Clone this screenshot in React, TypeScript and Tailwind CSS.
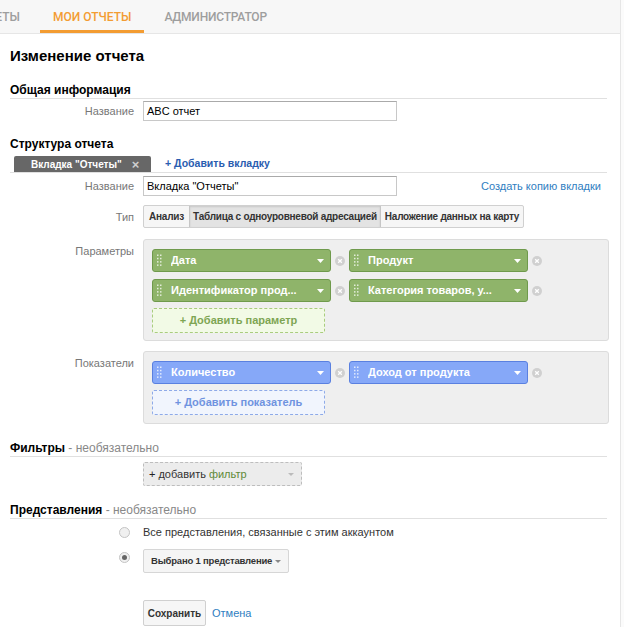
import React from 'react';

function Dots() {
  const items: React.ReactElement[] = [];
  for (let r = 0; r < 4; r++) {
    for (let c = 0; c < 2; c++) {
      items.push(<rect key={`${r}-${c}`} x={c * 3} y={r * 3.3 + 0.5} width="1.5" height="1.5" fill="rgba(255,255,255,0.75)" />);
    }
  }
  return (
    <svg width="5" height="13" viewBox="0 0 5 13">
      {items}
    </svg>
  );
}

function Chip({ label, color }: { label: string; color: 'green' | 'blue' }) {
  const cls = color === 'green' ? 'bg-[#8fb46a] border-[#6f9a4c]' : 'bg-[#86a8f8] border-[#5a80e0]';
  return (
    <div className={`flex items-center h-[23px] w-[179px] rounded-[3px] border ${cls} pl-[4px] pr-[6px]`}>
      <Dots />
      <span className="ml-[9px] flex-1 text-[11px] font-bold text-white whitespace-nowrap overflow-hidden">{label}</span>
      <svg width="7" height="4" viewBox="0 0 7 4">
        <path d="M0 0h7L3.5 4z" fill="#fff" />
      </svg>
    </div>
  );
}

function XIcon() {
  return (
    <svg width="10" height="10" viewBox="0 0 10 10">
      <circle cx="5" cy="5" r="5" fill="#d0d0d0" />
      <path d="M3.2 3.2l3.6 3.6M6.8 3.2l-3.6 3.6" stroke="#fff" strokeWidth="1.3" />
    </svg>
  );
}

function ChipRow({ a, b, color }: { a: string; b: string; color: 'green' | 'blue' }) {
  return (
    <div className="flex items-center gap-[4px]">
      <Chip label={a} color={color} />
      <XIcon />
      <Chip label={b} color={color} />
      <XIcon />
    </div>
  );
}

function SectionTitle({ title, optional }: { title: string; optional?: boolean }) {
  return (
    <div className="border-b border-[#e0e0e0] text-[12px] leading-[16px] text-black">
      <span className="font-bold">{title}</span>
      {optional && <span className="text-[#888]"> - необязательно</span>}
    </div>
  );
}

function Radio({ checked }: { checked?: boolean }) {
  return (
    <div className="w-[11px] h-[11px] rounded-full border border-[#c4c4c4] bg-[#f0f0f0] flex items-center justify-center">
      {checked && <div className="w-[5px] h-[5px] rounded-full bg-[#666]" />}
    </div>
  );
}

export default function App() {
  return (
    <div className="w-[624px] h-[627px] overflow-hidden flex bg-white font-['Liberation_Sans',Arial,sans-serif]">
      <div className="w-[621px] border-r border-[#e6e6e6] flex flex-col shrink-0">
        {/* nav */}
        <div className="h-[34px] bg-[#f7f7f7] border-b border-[#e6e6e6] flex font-['Roboto',sans-serif] text-[12px] font-medium uppercase overflow-hidden shrink-0">
          <div className="w-[33px] shrink-0 flex justify-end pr-[13px] pt-[8px] text-[#9e9e9e] whitespace-nowrap">Отчеты</div>
          <div className="ml-[7px] px-[13px] pt-[8px] text-[#f39c32] border-b-[3px] border-[#f39c32] whitespace-nowrap">Мои отчеты</div>
          <div className="ml-[7px] px-[13px] pt-[8px] text-[#9e9e9e] whitespace-nowrap tracking-[-0.2px]">Администратор</div>
        </div>

        <div className="pl-[10px] pr-[13px] flex flex-col">
          <div className="mt-[12px] text-[15px] leading-[20px] font-bold text-black">Изменение отчета</div>

          <div className="mt-[16px]">
            <SectionTitle title="Общая информация" />
          </div>
          <div className="mt-[2px] grid grid-cols-[124px_1fr] gap-x-[9px] items-center">
            <div className="text-right text-[11px] text-[#777]">Название</div>
            <div className="w-[254px] h-[20px] border border-[#c8c8c8] border-t-[#aaa] flex items-center px-[3px] text-[11px] text-black">ABC отчет</div>
          </div>

          <div className="mt-[15px] text-[12px] leading-[16px] font-bold text-black">Структура отчета</div>
          <div className="mt-[4px] border-b border-[#e0e0e0] flex items-end">
            <div className="ml-[4px] w-[137px] h-[16px] bg-[#676767] rounded-t-[2px] flex items-center text-[10px] font-bold text-white whitespace-nowrap">
              <span className="ml-[17px]">Вкладка "Отчеты"</span>
              <span className="ml-[10px] text-[#cfcfcf] text-[13px] leading-[13px] font-bold">×</span>
            </div>
            <div className="ml-[14px] h-[16px] flex items-center text-[10.5px] font-bold text-[#2a5db0] whitespace-nowrap">+ Добавить вкладку</div>
          </div>

          <div className="mt-[3px] grid grid-cols-[124px_1fr] gap-x-[9px] items-center">
            <div className="text-right text-[11px] text-[#777]">Название</div>
            <div className="flex items-center justify-between">
              <div className="w-[254px] h-[20px] border border-[#c8c8c8] border-t-[#aaa] flex items-center px-[3px] text-[11px] text-black">Вкладка "Отчеты"</div>
              <div className="text-[11px] text-[#2f7ec1] mr-[6px]">Создать копию вкладки</div>
            </div>
          </div>

          <div className="mt-[9px] grid grid-cols-[124px_1fr] gap-x-[9px]">
            <div className="text-right text-[11px] text-[#777] pt-[4px]">Тип</div>
            <div className="flex">
              <div className="flex h-[23px] border border-[#d0d0d0] rounded-[2px] bg-[#f6f6f6] text-[10px] font-bold text-[#333] whitespace-nowrap tracking-[-0.25px]">
                <div className="w-[45px] flex items-center justify-center">Анализ</div>
                <div className="w-[192px] flex items-center justify-center bg-[#e3e3e3] border-x border-[#c6c6c6] shadow-[inset_0_1px_2px_rgba(0,0,0,0.12)]">Таблица с одноуровневой адресацией</div>
                <div className="w-[142px] flex items-center justify-center">Наложение данных на карту</div>
              </div>
            </div>
          </div>

          <div className="mt-[11px] grid grid-cols-[124px_1fr] gap-x-[9px]">
            <div className="text-right text-[11px] text-[#777] pt-[4px]">Параметры</div>
            <div className="w-[466px] h-[102px] bg-[#efefef] border border-[#dcdcdc] rounded-[3px] pl-[8px] pt-[9px] flex flex-col gap-[7px]">
              <ChipRow a="Дата" b="Продукт" color="green" />
              <ChipRow a="Идентификатор прод..." b="Категория товаров, у..." color="green" />
              <div className="-mt-[1px] w-[173px] h-[25px] border border-dashed border-[#a9cc7e] bg-[#f2fae6] rounded-[2px] flex items-center justify-center text-[11px] font-bold text-[#7ea553]">+ Добавить параметр</div>
            </div>
          </div>

          <div className="mt-[10px] grid grid-cols-[124px_1fr] gap-x-[9px]">
            <div className="text-right text-[11px] text-[#777] pt-[4px]">Показатели</div>
            <div className="w-[466px] h-[73px] bg-[#efefef] border border-[#dcdcdc] rounded-[3px] pl-[8px] pt-[9px] flex flex-col gap-[6px]">
              <div className="flex items-center gap-[4px]">
                <Chip label="Количество" color="blue" />
                <XIcon />
                <Chip label="Доход от продукта" color="blue" />
                <XIcon />
              </div>
              <div className="w-[173px] h-[25px] border border-dashed border-[#8eaae8] bg-[#f1f5fd] rounded-[2px] flex items-center justify-center text-[11px] font-bold text-[#6f93e0]">+ Добавить показатель</div>
            </div>
          </div>

          <div className="mt-[16px]">
            <SectionTitle title="Фильтры" optional />
          </div>
          <div className="mt-[5px] grid grid-cols-[124px_1fr] gap-x-[9px]">
            <div />
            <div className="w-[159px] h-[24px] border border-dashed border-[#bdbdbd] bg-[#ececec] rounded-[2px] flex items-center pl-[5px] pr-[7px] text-[11px]">
              <span className="text-[#222]">+</span>
              <span className="ml-[3px] text-[#333]">добавить</span>
              <span className="ml-[3px] text-[#5f8a38]">фильтр</span>
              <span className="flex-1" />
              <svg width="6" height="3" viewBox="0 0 6 3">
                <path d="M0 0h6L3 3z" fill="#bbb" />
              </svg>
            </div>
          </div>

          <div className="mt-[16px]">
            <SectionTitle title="Представления" optional />
          </div>
          <div className="mt-[4px] grid grid-cols-[124px_1fr] gap-x-[9px] items-center h-[18px]">
            <div className="flex justify-end">
              <div className="mr-[4px]"><Radio /></div>
            </div>
            <div className="text-[11px] text-[#333]">Все представления, связанные с этим аккаунтом</div>
          </div>
          <div className="mt-[8px] grid grid-cols-[124px_1fr] gap-x-[9px]">
            <div className="flex justify-end pt-[3px]">
              <div className="mr-[4px]"><Radio checked /></div>
            </div>
            <div className="flex">
              <div className="w-[146px] h-[24px] border border-[#d6d6d6] bg-[#f5f5f5] rounded-[2px] flex items-center pl-[7px] pr-[7px] text-[9.5px] font-bold text-[#333] whitespace-nowrap tracking-[-0.2px]">
                <span>Выбрано 1 представление</span>
                <span className="flex-1" />
                <svg width="6" height="3" viewBox="0 0 6 3">
                  <path d="M0 0h6L3 3z" fill="#888" />
                </svg>
              </div>
            </div>
          </div>

          <div className="mt-[27px] grid grid-cols-[124px_1fr] gap-x-[9px]">
            <div />
            <div className="flex items-center">
              <div className="w-[63px] h-[26px] border border-[#d0d0d0] bg-[#f6f6f6] rounded-[2px] flex items-center justify-center text-[10px] font-bold text-[#333]">Сохранить</div>
              <div className="ml-[6px] text-[11px] text-[#2f7ec1]">Отмена</div>
            </div>
          </div>
        </div>
      </div>
      <div className="flex-1 bg-[#fbfbfb]" />
    </div>
  );
}
